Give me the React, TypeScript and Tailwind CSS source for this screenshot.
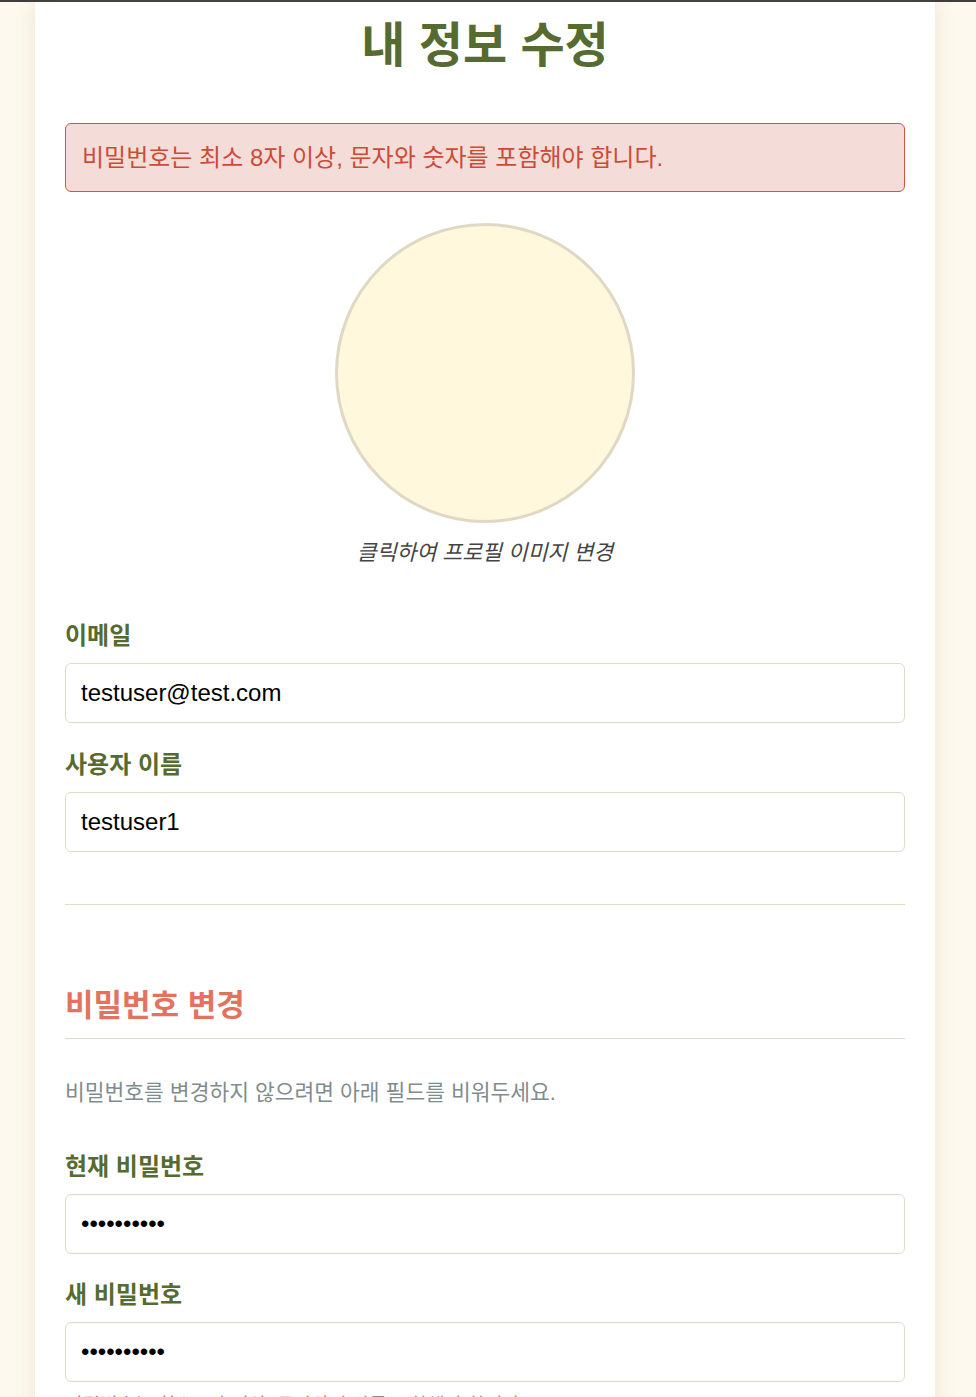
import React from "react";

const FONT = { fontFamily: '"Liberation Sans", "Noto Sans CJK KR", sans-serif' };

function Field({ label, type = "text", value }: { label: string; type?: string; value: string }) {
  return (
    <div className="flex flex-col">
      <label className="text-[24px] leading-[30px] font-bold text-[#556b2f] mb-[12px]">{label}</label>
      <input
        type={type}
        defaultValue={value}
        readOnly
        className="h-[60px] w-full rounded-[6px] border border-[#e0dbc6] bg-white px-[15px] text-[24px] text-black outline-none"
        style={FONT}
      />
    </div>
  );
}

export default function App() {
  return (
    <div className="min-h-[1397px] bg-[#fdf9ee]" style={FONT}>
      <div className="h-[2px] bg-[#3d3d3d]" />
      <div className="ml-[35px] w-[900px] bg-white px-[30px] pt-[16px] pb-[40px] shadow-[0_0_18px_rgba(160,140,90,0.18)]">
        <h1 className="text-center text-[48px] leading-[56px] font-bold text-[#556b2f]">내 정보 수정</h1>

        <div className="mt-[49px] rounded-[6px] border border-[#d4553f] bg-[#f4ddd8] px-[16px] py-[16px] text-[24px] leading-[35px] text-[#cc4b37]">
          비밀번호는 최소 8자 이상, 문자와 숫자를 포함해야 합니다.
        </div>

        <div className="mt-[31px] flex flex-col items-center">
          <div className="h-[300px] w-[300px] rounded-full border-[3px] border-[#ded8c4] bg-[#fff8dc]" />
          <p className="mt-[15px] text-[21.6px] leading-[30px] italic text-[#444444]">클릭하여 프로필 이미지 변경</p>
        </div>

        <div className="mt-[53px] flex flex-col gap-[27px]">
          <Field label="이메일" value="testuser@test.com" />
          <Field label="사용자 이름" value="testuser1" />
        </div>

        <div className="mt-[52px] border-t border-[#e0dbc6]" />

        <h2 className="mt-[81px] border-b border-[#e0dbc6] pb-[12px] text-[31px] leading-[40px] font-bold text-[#e2735f]">
          비밀번호 변경
        </h2>
        <p className="mt-[39px] text-[21.5px] leading-[30px] text-[#7f8c8d]">
          비밀번호를 변경하지 않으려면 아래 필드를 비워두세요.
        </p>

        <div className="mt-[44px] flex flex-col gap-[26px]">
          <Field label="현재 비밀번호" type="password" value="password12" />
          <div className="flex flex-col">
            <Field label="새 비밀번호" type="password" value="password12" />
            <p className="mt-[10px] text-[19px] leading-[27px] text-[#7f8c8d]">
              비밀번호는 최소 8자 이상, 문자와 숫자를 포함해야 합니다.
            </p>
          </div>
        </div>
      </div>
    </div>
  );
}
